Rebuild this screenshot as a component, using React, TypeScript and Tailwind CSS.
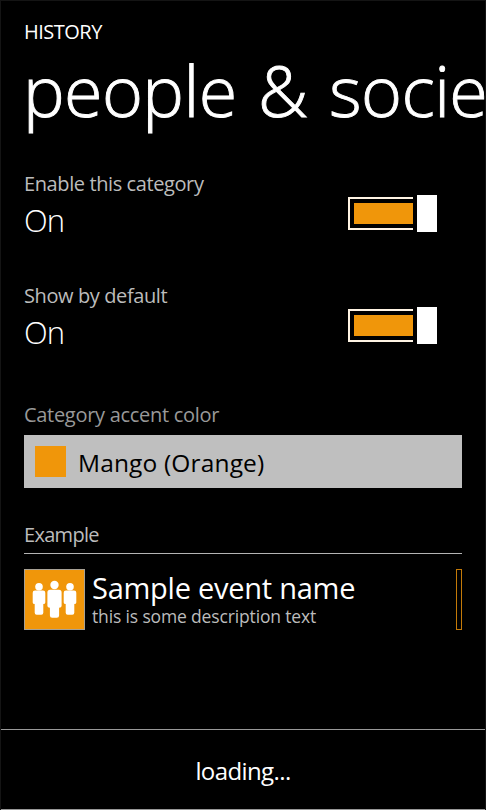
function Toggle({ label }: { label: string }) {
  return (
    <section className="flex h-[112px] items-start justify-between pr-[25px]">
      <div className="pt-px">
        <div className="h-6 text-[20px] leading-6 tracking-[-0.4px] text-[#bcbcbc]">{label}</div>
        <div className="mt-1 h-10 text-[31px] font-light leading-10 tracking-[-1px]">On</div>
      </div>
      <div className="mt-6 flex h-[37px] items-center gap-1">
        <div className="h-[33px] w-[65px] border-2 border-r-0 border-[#fff4e4] py-1 pl-1">
          <div className="h-full bg-[#f0960a]" />
        </div>
        <div className="h-[37px] w-5 bg-white" />
      </div>
    </section>
  );
}

function People() {
  return (
    <svg viewBox="0 0 59 59" className="h-full w-full" fill="white">
      <circle cx="14" cy="16.7" r="3.8" />
      <path d="M10 20.500h8q2.300 0 2.300 2.300v9.700q0 1.500-2 1.500v8.700q0 2-2 2h-4.600q-2 0-2-2v-8.700q-2 0-2-1.500v-9.700q0-2.300 2.300-2.300Z" />
      <circle cx="45" cy="16.7" r="3.8" />
      <path d="M41 20.500h8q2.300 0 2.300 2.300v9.700q0 1.500-2 1.500v8.700q0 2-2 2h-4.600q-2 0-2-2v-8.700q-2 0-2-1.500v-9.700q0-2.300 2.300-2.300Z" />
      <circle cx="29.5" cy="15" r="4.2" />
      <path d="M25.100 19.700h8.800q2.700 0 2.700 2.700v13.600q0 1.800-2.500 1.800v7.700q0 2.300-2.300 2.300h-4.600q-2.300 0-2.300-2.300v-7.700q-2.500 0-2.500-1.800v-13.600q0-2.700 2.700-2.700Z" />
    </svg>
  );
}

export default function App() {
  return (
    <main className="flex h-[810px] w-[486px] flex-col overflow-hidden border border-b-0 border-[#141414] bg-black font-['Open_Sans','Noto_Sans',sans-serif] text-white">
      <div className="flex h-[728px] flex-col pl-[23px] pr-[23px] pt-[19px]">
        <div className="h-6 shrink-0 text-[20px] leading-6 tracking-[-0.5px]">HISTORY</div>
        <h1 className="-ml-px h-[90px] shrink-0 whitespace-nowrap text-[70px] font-light leading-[92px] tracking-[-0.6px] [word-spacing:4px] [-webkit-text-stroke:0.9px_white]">people &amp; society</h1>
        <div className="mt-[37px]">
          <Toggle label="Enable this category" />
          <Toggle label="Show by default" />
        </div>
        <div className="mt-[8px] h-6 shrink-0 text-[20px] leading-6 tracking-[-0.3px] text-[#999]">Category accent color</div>
        <div className="mt-[8px] flex h-[53px] shrink-0 items-center gap-3 bg-[#bfbfbf] pl-[11px] text-black">
          <div className="size-[31px] bg-[#f0960a]" />
          <span className="pt-0.5 text-[24.5px] leading-8 tracking-[0.15px]">Mango (Orange)</span>
        </div>
        <div className="mt-[35px] h-[31px] shrink-0 border-b border-[#b4b4b4] text-[20px] leading-6 tracking-[-0.7px] text-[#bcbcbc]">Example</div>
        <div className="mt-[15px] flex h-[61px] shrink-0">
          <div className="size-[61px] border border-[#a8a194] bg-[#f0960a]"><People /></div>
          <div className="ml-[7px] flex-1">
            <div className="h-9 text-[29px] leading-[38px] tracking-[-0.25px]">Sample event name</div>
            <div className="h-[22px] text-[17.5px] leading-[22px] tracking-[-0.15px] text-[#bcbcbc]">this is some description text</div>
          </div>
          <div className="w-[6px] border border-[#c47a08]" />
        </div>
      </div>
      <footer className="-mx-px flex h-[81px] items-center justify-center border-y border-[#999] pt-[3px] text-[24px] leading-8 tracking-[-0.6px]">loading...</footer>
    </main>
  );
}
